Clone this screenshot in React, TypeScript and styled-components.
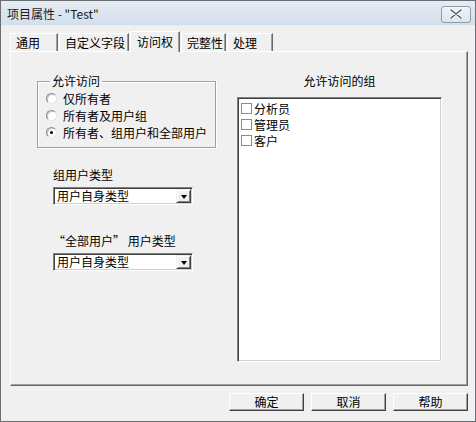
import React from "react";
import styled, { createGlobalStyle } from "styled-components";

const GlobalStyle = createGlobalStyle`
  html, body { margin: 0; padding: 0; background: #f0f0f0; }
  body { font-family: "Noto Sans CJK SC", "Liberation Sans", sans-serif; font-size: 12px; color: #000; }
`;

const Window = styled.div`
  box-sizing: border-box;
  width: 476px;
  height: 422px;
  border: 1px solid #6a6f76;
  background: #f0f0f0;
  display: flex;
  flex-direction: column;
`;

const TitleBar = styled.div`
  height: 24px;
  flex: none;
  display: flex;
  align-items: center;
  justify-content: space-between;
  padding: 0 4px 0 6px;
  background: linear-gradient(#e6ecf2, #d2dfeb);
  border-bottom: 1px solid #e8eef4;
`;

const Title = styled.span`
  font-size: 12px;
  line-height: 14px;
  color: #1a1a1a;
  margin-top: 2px;
`;

const CloseButton = styled.div`
  box-sizing: border-box;
  width: 30px;
  height: 17px;
  margin-top: 2px;
  border: 1px solid #8f9cab;
  border-radius: 3px;
  background: linear-gradient(#f1f4f7, #dde4ec);
  display: flex;
  align-items: center;
  justify-content: center;
`;

const Body = styled.div`
  flex: 1;
  display: flex;
  flex-direction: column;
  padding: 5px 7px 0 9px;
`;

const TabRow = styled.div`
  display: flex;
  align-items: flex-end;
  height: 20px;
  position: relative;
  z-index: 1;
`;

const Tab = styled.div<{ $w: number; $active?: boolean }>`
  box-sizing: border-box;
  width: ${(p) => p.$w}px;
  height: ${(p) => (p.$active ? 21 : 18)}px;
  margin-bottom: ${(p) => (p.$active ? -1 : 0)}px;
  margin-right: 1px;
  padding: ${(p) => (p.$active ? "2px 0 0 6px" : "1px 0 0 5px")};
  background: #f0f0f0;
  border-top: 1px solid #ffffff;
  border-left: 1px solid #ffffff;
  border-right: 1px solid #696969;
  box-shadow: inset -1px 0 #a0a0a0;
  line-height: 15px;
  font-size: 12px;
  white-space: nowrap;
`;

const Panel = styled.div`
  box-sizing: border-box;
  width: 458px;
  height: 335px;
  display: flex;
  padding: 21px 0 0 26px;
  border-top: 1px solid #ffffff;
  border-left: 1px solid #ffffff;
  border-right: 1px solid #696969;
  border-bottom: 1px solid #696969;
  box-shadow: inset -1px -1px #a0a0a0;
`;

const LeftColumn = styled.div`
  width: 179px;
  display: flex;
  flex-direction: column;
`;

const GroupBox = styled.fieldset`
  box-sizing: border-box;
  margin: 0;
  width: 179px;
  padding: 1px 6px 6px 8px;
  border: 1px solid #a0a0a0;
  box-shadow: 1px 1px #ffffff, inset 1px 1px #ffffff;
  display: flex;
  flex-direction: column;
`;

const Legend = styled.legend`
  padding: 0 2px;
  margin-left: 4px;
  line-height: 16px;
  font-size: 12px;
`;

const RadioRow = styled.div`
  height: 17px;
  display: flex;
  align-items: center;
  gap: 6px;
  white-space: nowrap;
`;

const RadioCircle = styled.span<{ $checked?: boolean }>`
  box-sizing: border-box;
  width: 11px;
  height: 11px;
  border-radius: 50%;
  background: #ffffff;
  border: 1px solid;
  border-color: #8a8a8a #e8e8e8 #e8e8e8 #8a8a8a;
  box-shadow: inset 1px 1px #c8c8c8;
  display: flex;
  align-items: center;
  justify-content: center;
  &::after {
    content: "";
    width: 3px;
    height: 3px;
    border-radius: 50%;
    background: ${(p) => (p.$checked ? "#000" : "transparent")};
  }
`;

const FieldLabel = styled.div<{ $top: number }>`
  margin: ${(p) => p.$top}px 0 0 16px;
  line-height: 14px;
  white-space: nowrap;
`;

const Select = styled.div`
  box-sizing: border-box;
  margin: 5px 0 0 16px;
  width: 140px;
  height: 18px;
  background: #ffffff;
  border: 1px solid;
  border-color: #808080 #ffffff #ffffff #808080;
  box-shadow: inset 1px 1px #404040, inset -1px -1px #d4d0c8;
  display: flex;
  align-items: center;
  justify-content: space-between;
  padding: 1px 1px 1px 3px;
`;

const SelectText = styled.span`
  line-height: 14px;
  white-space: nowrap;
`;

const DropButton = styled.span`
  box-sizing: border-box;
  width: 15px;
  height: 14px;
  flex: none;
  background: #f0f0f0;
  border: 1px solid;
  border-color: #f0f0f0 #404040 #404040 #f0f0f0;
  box-shadow: inset 1px 1px #ffffff, inset -1px -1px #808080;
  display: flex;
  align-items: center;
  justify-content: center;
  &::after {
    content: "";
    width: 0;
    height: 0;
    border-left: 3.5px solid transparent;
    border-right: 3.5px solid transparent;
    border-top: 4px solid #000;
    margin-top: 1px;
  }
`;

const RightColumn = styled.div`
  margin-left: 21px;
  width: 205px;
  display: flex;
  flex-direction: column;
`;

const ListTitle = styled.div`
  text-align: center;
  line-height: 16px;
`;

const ListBox = styled.div`
  box-sizing: border-box;
  margin-top: 8px;
  width: 205px;
  height: 265px;
  background: #ffffff;
  border: 1px solid;
  border-color: #808080 #ffffff #ffffff #808080;
  box-shadow: inset 1px 1px #404040, inset -1px -1px #d4d0c8;
  padding: 2px 2px 2px 3px;
  display: flex;
  flex-direction: column;
`;

const ListItem = styled.div`
  height: 16px;
  display: flex;
  align-items: center;
  gap: 2px;
  white-space: nowrap;
`;

const CheckBox = styled.span`
  box-sizing: border-box;
  width: 11px;
  height: 11px;
  background: #ffffff;
  border: 1px solid #8c8c8c;
`;

const ButtonRow = styled.div`
  display: flex;
  justify-content: flex-end;
  gap: 7px;
  margin-top: 7px;
  width: 458px;
`;

const Button = styled.div`
  box-sizing: border-box;
  width: 75px;
  height: 18px;
  background: #f0f0f0;
  border: 1px solid;
  border-color: #ffffff #404040 #404040 #ffffff;
  box-shadow: inset -1px -1px #a0a0a0;
  display: flex;
  align-items: center;
  justify-content: center;
  line-height: 14px;
`;

const tabs: { label: string; w: number; active?: boolean }[] = [
  { label: "通用", w: 48 },
  { label: "自定义字段", w: 70 },
  { label: "访问权", w: 50, active: true },
  { label: "完整性", w: 45 },
  { label: "处理", w: 46 },
];

const radios = [
  { label: "仅所有者" },
  { label: "所有者及用户组" },
  { label: "所有者、组用户和全部用户", checked: true },
];

const groups = ["分析员", "管理员", "客户"];

export default function App() {
  return (
    <>
      <GlobalStyle />
      <Window>
        <TitleBar>
          <Title>项目属性 - "Test"</Title>
          <CloseButton>
            <svg width="14" height="10" viewBox="0 0 14 10">
              <path d="M2 1 L12 9 M12 1 L2 9" stroke="#ffffff" strokeWidth="3.2" strokeLinecap="round" />
              <path d="M2 1 L12 9 M12 1 L2 9" stroke="#4a5563" strokeWidth="1.4" strokeLinecap="round" />
            </svg>
          </CloseButton>
        </TitleBar>
        <Body>
          <TabRow>
            {tabs.map((t) => (
              <Tab key={t.label} $w={t.w} $active={t.active}>
                {t.label}
              </Tab>
            ))}
          </TabRow>
          <Panel>
            <LeftColumn>
              <GroupBox>
                <Legend>允许访问</Legend>
                {radios.map((r) => (
                  <RadioRow key={r.label}>
                    <RadioCircle $checked={r.checked} />
                    {r.label}
                  </RadioRow>
                ))}
              </GroupBox>
              <FieldLabel $top={20}>组用户类型</FieldLabel>
              <Select>
                <SelectText>用户自身类型</SelectText>
                <DropButton />
              </Select>
              <FieldLabel $top={29}>“全部用户” 用户类型</FieldLabel>
              <Select>
                <SelectText>用户自身类型</SelectText>
                <DropButton />
              </Select>
            </LeftColumn>
            <RightColumn>
              <ListTitle>允许访问的组</ListTitle>
              <ListBox>
                {groups.map((g) => (
                  <ListItem key={g}>
                    <CheckBox />
                    {g}
                  </ListItem>
                ))}
              </ListBox>
            </RightColumn>
          </Panel>
          <ButtonRow>
            <Button>确定</Button>
            <Button>取消</Button>
            <Button>帮助</Button>
          </ButtonRow>
        </Body>
      </Window>
    </>
  );
}
